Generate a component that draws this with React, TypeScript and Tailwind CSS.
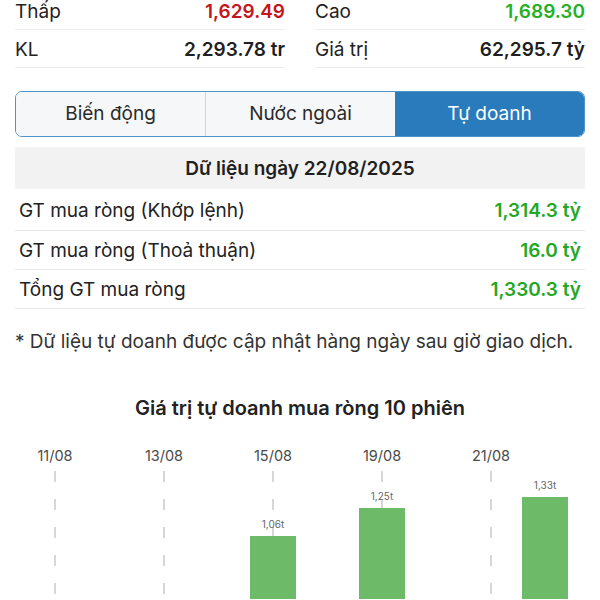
import React from "react";

const stats = [
  [
    { label: "Thấp", value: "1,629.49", color: "text-[#c4161c]" },
    { label: "Cao", value: "1,689.30", color: "text-[#25b025]" },
  ],
  [
    { label: "KL", value: "2,293.78 tr", color: "text-[#1f1f1f]" },
    { label: "Giá trị", value: "62,295.7 tỷ", color: "text-[#1f1f1f]" },
  ],
];

const rows = [
  { label: "GT mua ròng (Khớp lệnh)", value: "1,314.3 tỷ" },
  { label: "GT mua ròng (Thoả thuận)", value: "16.0 tỷ" },
  { label: "Tổng GT mua ròng", value: "1,330.3 tỷ" },
];

const lines = [
  { x: 55, label: "11/08" },
  { x: 164, label: "13/08" },
  { x: 273, label: "15/08" },
  { x: 382, label: "19/08" },
  { x: 491, label: "21/08" },
];

const bars = [
  { cx: 273, top: 97, label: "1,06t" },
  { cx: 382, top: 69, label: "1,25t" },
  { cx: 545, top: 58, label: "1,33t" },
];

export default function App() {
  return (
    <div
      className="w-[600px] h-[600px] overflow-hidden bg-white px-[15px] text-[#1f1f1f]"
      style={{ fontFamily: "Inter, 'Noto Sans', sans-serif" }}
    >
      {/* Stats */}
      <div className="-mt-[8px] flex flex-col">
        {stats.map((row, i) => (
          <div key={i} className="grid grid-cols-2 gap-[30px]">
            {row.map((s) => (
              <div
                key={s.label}
                className="h-[38px] pt-[4px] flex items-center justify-between border-b border-[#ececec] text-[19px]"
              >
                <span className="text-[#222]">{s.label}</span>
                <span className={`font-semibold ${s.color}`}>{s.value}</span>
              </div>
            ))}
          </div>
        ))}
      </div>

      {/* Tabs */}
      <div className="mt-[23px] h-[46px] flex rounded-[7px] border border-[#4f93ca] overflow-hidden text-[19px]">
        <div className="flex-1 flex items-center justify-center bg-[#f6f7f8] text-[#2a2a2a] border-r border-[#cfd3d8]">
          Biến động
        </div>
        <div className="flex-1 flex items-center justify-center bg-[#f6f7f8] text-[#2a2a2a]">
          Nước ngoài
        </div>
        <div className="flex-1 flex items-center justify-center bg-[#2a7bbb] text-white">
          Tự doanh
        </div>
      </div>

      {/* Data header */}
      <div className="mt-[10px] h-[42px] pt-[2px] flex items-center justify-center bg-[#f2f2f2] text-[19px] font-semibold text-[#1f1f1f]">
        Dữ liệu ngày 22/08/2025
      </div>
      {rows.map((r, i) => (
        <div
          key={r.label}
          className={`${i === 0 ? "h-[42px]" : "h-[39px]"} pt-[3px] flex items-center justify-between border-b border-[#e8e8e8] text-[19px] px-[4px]`}
        >
          <span className="text-[#222]">{r.label}</span>
          <span className="font-semibold text-[#22a822]">{r.value}</span>
        </div>
      ))}

      {/* Footnote */}
      <div className="mt-[22px] leading-[22px] text-[19px] text-[#333] whitespace-nowrap">
        * Dữ liệu tự doanh được cập nhật hàng ngày sau giờ giao dịch.
      </div>

      {/* Chart title */}
      <div className="mt-[44px] leading-[22px] text-center text-[20px] font-semibold text-[#222]">
        Giá trị tự doanh mua ròng 10 phiên
      </div>

      {/* Chart */}
      <div className="-mx-[15px] mt-[20px]">
        <svg width="600" height="160" viewBox="0 0 600 160">
          {lines.map((l) => (
            <g key={l.label}>
              <text
                x={l.x}
                y={22}
                textAnchor="middle"
                fontSize="14.5"
                fill="#4a4a4a"
                fontFamily="Inter, sans-serif"
              >
                {l.label}
              </text>
              <line
                x1={l.x}
                x2={l.x}
                y1={32}
                y2={160}
                stroke="#bdbdbd"
                strokeWidth="1.2"
                strokeDasharray="11 17"
              />
            </g>
          ))}
          {bars.map((b) => (
            <g key={b.label}>
              <rect x={b.cx - 23} y={b.top} width={46} height={160 - b.top} fill="#6dbb68" />
              <text
                x={b.cx}
                y={b.top - 8}
                textAnchor="middle"
                fontSize="10"
                fill="#666"
                fontFamily="Inter, sans-serif"
              >
                {b.label}
              </text>
            </g>
          ))}
        </svg>
      </div>
    </div>
  );
}
